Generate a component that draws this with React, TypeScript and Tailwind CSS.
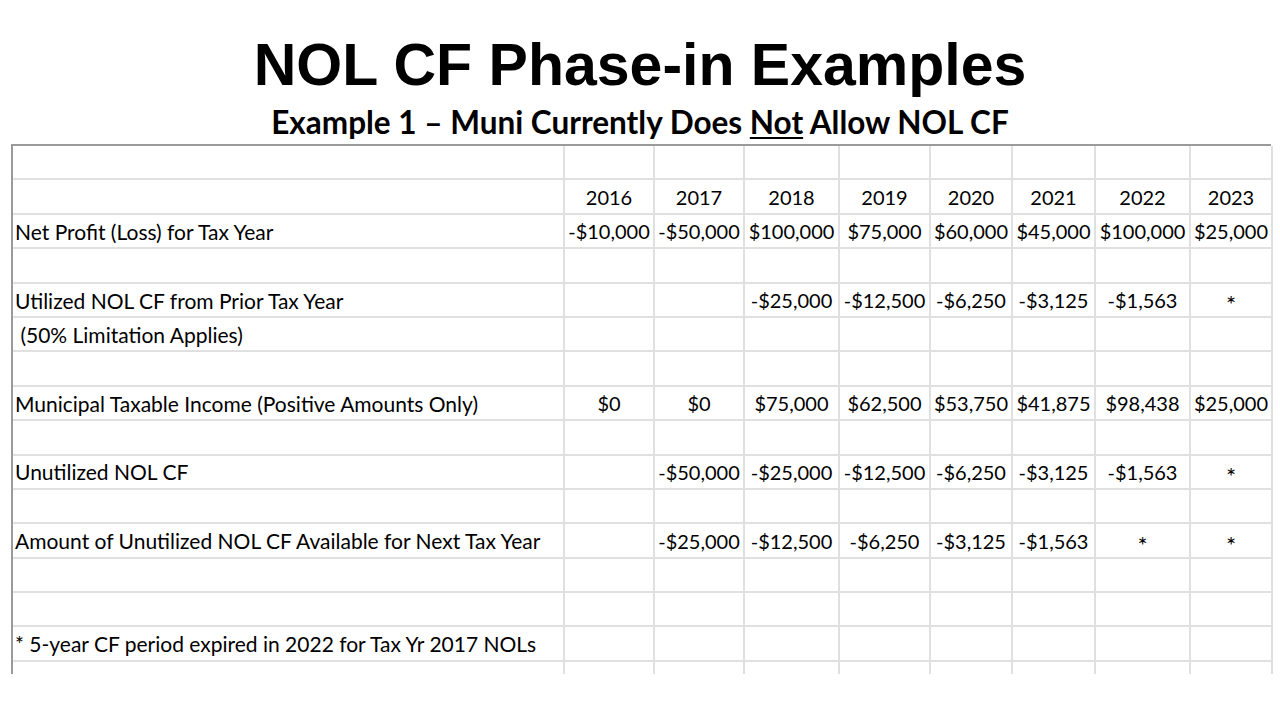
const years = ["2016", "2017", "2018", "2019", "2020", "2021", "2022", "2023"];

const rows: string[][] = [
  [],
  ["", ...years],
  ["Net Profit (Loss) for Tax Year", "-$10,000", "-$50,000", "$100,000", "$75,000", "$60,000", "$45,000", "$100,000", "$25,000"],
  [],
  ["Utilized NOL CF from Prior Tax Year", "", "", "-$25,000", "-$12,500", "-$6,250", "-$3,125", "-$1,563", "*"],
  ["\u00a0(50% Limitation Applies)"],
  [],
  ["Municipal Taxable Income (Positive Amounts Only)", "$0", "$0", "$75,000", "$62,500", "$53,750", "$41,875", "$98,438", "$25,000"],
  [],
  ["Unutilized NOL CF", "", "-$50,000", "-$25,000", "-$12,500", "-$6,250", "-$3,125", "-$1,563", "*"],
  [],
  ["Amount of Unutilized NOL CF Available for Next Tax Year", "", "-$25,000", "-$12,500", "-$6,250", "-$3,125", "-$1,563", "*", "*"],
  [],
  [],
  ["* 5-year CF period expired in 2022 for Tax Yr 2017 NOLs"],
];

function Row({ cells, last }: { cells: string[]; last?: boolean }) {
  const full = Array.from({ length: 9 }, (_, i) => cells[i] ?? "");
  return (
    <div
      className={
        last
          ? "grid grid-cols-[552px_90px_90px_95px_91px_82px_83px_95px_82px] grid-rows-[12px] h-[12px]"
          : "grid grid-cols-[552px_90px_90px_95px_91px_82px_83px_95px_82px] grid-rows-[34.4px] h-[34.4px]"
      }
    >
      {full.map((c, i) => (
        <div
          key={i}
          className={
            (last ? "" : "border-b-[2px] ") +
            "border-r-[2px] border-[#e0e0e0] flex items-center whitespace-nowrap pt-[1px] " +
            (i === 0
              ? "justify-start pl-[2px] text-[21px]"
              : c === "*"
                ? "justify-center text-[24px] leading-none"
                : "justify-center text-[20px]")
          }
        >
          {c === "*" ? <span className="translate-y-[4px]">*</span> : c}
        </div>
      ))}
    </div>
  );
}

export default function App() {
  return (
    <div className="w-[1280px] h-[720px] bg-white text-black overflow-hidden">
      <h1 className="mt-[36px] h-[58px] text-center text-[59px] leading-[58px] font-bold font-['Liberation_Sans',Arial,sans-serif]">
        NOL CF Phase-in Examples
      </h1>
      <h2 className="mt-[13px] h-[30px] text-center text-[31.5px] leading-[30px] font-bold font-['Lato',sans-serif]">
        Example 1 – Muni Currently Does <span className="underline underline-offset-[3px] decoration-[2px]">Not</span> Allow NOL CF
      </h2>
      <div className="ml-[11px] mt-[7px] w-[1260px] border-t-[2px] border-l-[2px] border-[#9a9a9a] font-['Lato',sans-serif]">
        {rows.map((r, i) => (
          <Row key={i} cells={r} />
        ))}
        <Row cells={[]} last />
      </div>
    </div>
  );
}
